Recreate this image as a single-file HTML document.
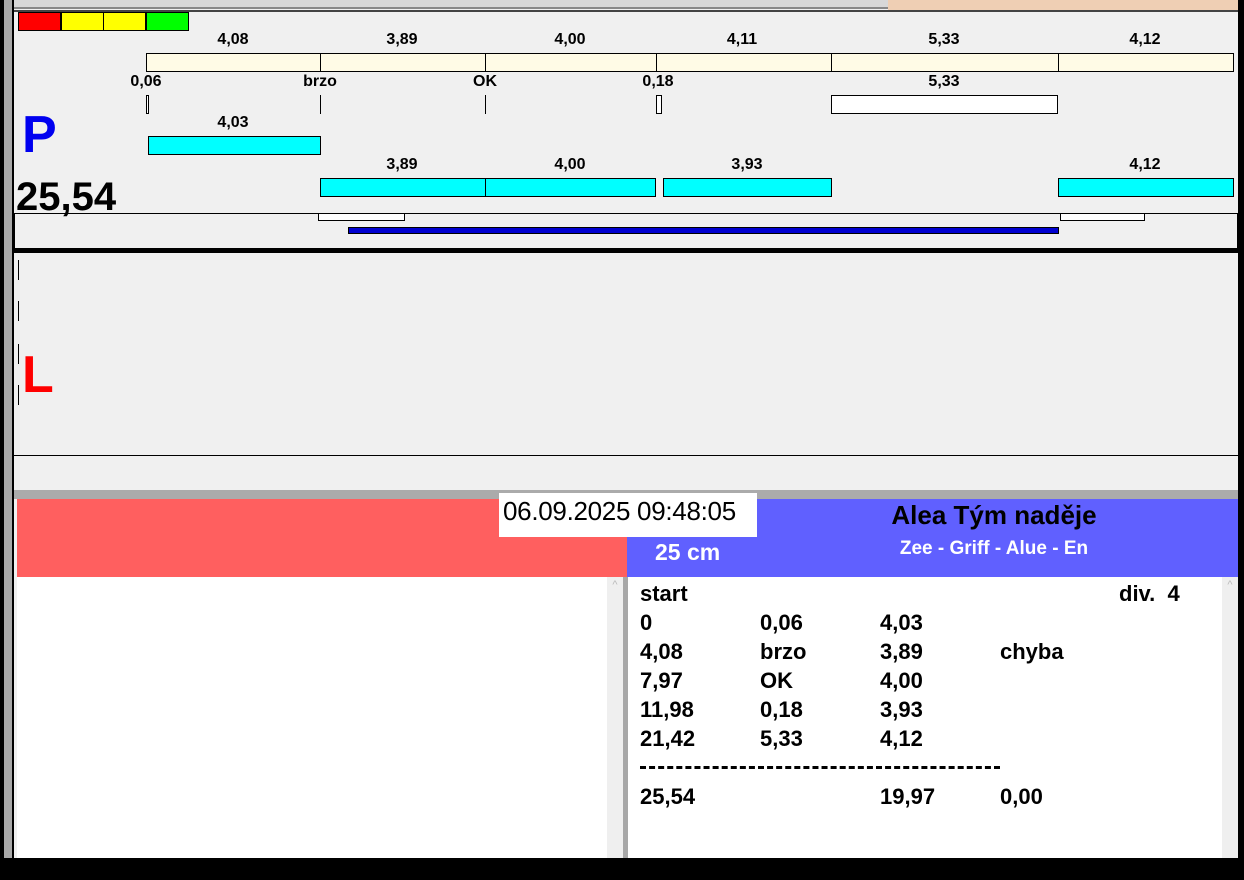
<!DOCTYPE html>
<html><head><meta charset="utf-8"><style>
*{margin:0;padding:0;box-sizing:border-box}
body{width:1244px;height:880px;background:#f0f0f0;position:relative;overflow:hidden;font-family:"Liberation Sans",sans-serif}
div{position:absolute}
.t{font-weight:bold;font-size:16px;color:#000;text-align:center;width:80px;line-height:18px}
.y{background:#fffbe6;border:1px solid #000;height:19px;top:53px}
.c{background:#00ffff;border:1px solid #000;height:19px}
.r{font-weight:bold;font-size:22px;line-height:29px;color:#000}
</style></head><body>
<div style="left:0;top:0;width:4px;height:880px;background:#000"></div>
<div style="left:4px;top:0;width:8px;height:880px;background:#a8a8a8"></div>
<div style="left:12px;top:0;width:2px;height:880px;background:#000"></div>
<div style="left:1238px;top:0;width:6px;height:880px;background:#000"></div>
<div style="left:14px;top:0;width:874px;height:9px;background:#d8d8d8;border-bottom:2px solid #888"></div>
<div style="left:888px;top:0;width:350px;height:11px;background:#efcfb4"></div>
<div style="left:14px;top:10px;width:1224px;height:2px;background:#444"></div>
<div style="left:18px;top:12px;width:43px;height:19px;background:#f00;border:1px solid #000"></div>
<div style="left:61px;top:12px;width:43px;height:19px;background:#ff0;border:1px solid #000"></div>
<div style="left:103px;top:12px;width:43px;height:19px;background:#ff0;border:1px solid #000"></div>
<div style="left:146px;top:12px;width:43px;height:19px;background:#0f0;border:1px solid #000"></div>
<div class="t" style="left:193px;top:31px">4,08</div>
<div class="t" style="left:362px;top:31px">3,89</div>
<div class="t" style="left:530px;top:31px">4,00</div>
<div class="t" style="left:702px;top:31px">4,11</div>
<div class="t" style="left:904px;top:31px">5,33</div>
<div class="t" style="left:1105px;top:31px">4,12</div>
<div class="y" style="left:146px;width:175px"></div>
<div class="y" style="left:320px;width:166px"></div>
<div class="y" style="left:485px;width:172px"></div>
<div class="y" style="left:656px;width:176px"></div>
<div class="y" style="left:831px;width:228px"></div>
<div class="y" style="left:1058px;width:176px"></div>
<div class="t" style="left:106px;top:73px">0,06</div>
<div class="t" style="left:280px;top:73px">brzo</div>
<div class="t" style="left:445px;top:73px">OK</div>
<div class="t" style="left:618px;top:73px">0,18</div>
<div class="t" style="left:904px;top:73px">5,33</div>
<div style="left:146px;top:95px;width:3px;height:19px;border:1px solid #000;background:#fff"></div>
<div style="left:320px;top:95px;width:1px;height:19px;background:#000"></div>
<div style="left:485px;top:95px;width:1px;height:19px;background:#000"></div>
<div style="left:656px;top:95px;width:6px;height:19px;border:1px solid #000;background:#fff"></div>
<div style="left:831px;top:95px;width:227px;height:19px;border:1px solid #000;background:#fff"></div>
<div style="left:22px;top:105px;font-size:52px;font-weight:bold;color:#0000f0;line-height:60px">P</div>
<div class="t" style="left:193px;top:114px">4,03</div>
<div class="c" style="left:148px;top:136px;width:173px"></div>
<div class="t" style="left:362px;top:156px">3,89</div>
<div class="t" style="left:530px;top:156px">4,00</div>
<div class="t" style="left:707px;top:156px">3,93</div>
<div class="t" style="left:1105px;top:156px">4,12</div>
<div class="c" style="left:320px;top:178px;width:166px"></div>
<div class="c" style="left:485px;top:178px;width:171px"></div>
<div class="c" style="left:663px;top:178px;width:169px"></div>
<div class="c" style="left:1058px;top:178px;width:176px"></div>
<div style="left:16px;top:174px;font-size:40px;font-weight:bold;line-height:46px">25,54</div>
<div style="left:14px;top:213px;width:1224px;height:36px;border-top:1px solid #000;border-left:1px solid #000;border-right:1px solid #000"></div>
<div style="left:318px;top:213px;width:87px;height:8px;border:1px solid #000;background:#fff"></div>
<div style="left:1060px;top:213px;width:85px;height:8px;border:1px solid #000;background:#fff"></div>
<div style="left:348px;top:227px;width:711px;height:7px;background:#0000d0;border:1px solid #000"></div>
<div style="left:14px;top:248px;width:1224px;height:5px;background:#000"></div>
<div style="left:18px;top:260px;width:1px;height:20px;background:#000"></div>
<div style="left:18px;top:301px;width:1px;height:20px;background:#000"></div>
<div style="left:18px;top:344px;width:1px;height:20px;background:#000"></div>
<div style="left:18px;top:385px;width:1px;height:20px;background:#000"></div>
<div style="left:22px;top:347px;font-size:52px;font-weight:bold;color:#f00;line-height:56px">L</div>
<div style="left:14px;top:455px;width:1224px;height:1px;background:#000"></div>
<div style="left:14px;top:490px;width:1224px;height:9px;background:#ababab"></div>
<div style="left:17px;top:499px;width:610px;height:78px;background:#ff5f5f"></div>
<div style="left:627px;top:499px;width:611px;height:78px;background:#6060ff"></div>
<div style="left:499px;top:493px;width:258px;height:44px;background:#fff"></div>
<div style="left:503px;top:495px;font-size:26px;line-height:32px;letter-spacing:-0.3px">06.09.2025 09:48:05</div>
<div style="left:794px;top:499px;width:400px;text-align:center;font-size:26px;font-weight:bold;line-height:32px">Alea Tým naděje</div>
<div style="left:794px;top:537px;width:400px;text-align:center;font-size:19px;font-weight:bold;line-height:24px;color:#fff">Zee - Griff - Alue - En</div>
<div style="left:655px;top:538px;font-size:23px;font-weight:bold;line-height:28px;color:#fff">25 cm</div>
<div style="left:17px;top:577px;width:590px;height:281px;background:#fff"></div>
<div style="left:607px;top:577px;width:16px;height:281px;background:#efefef;color:#bbb;font-size:11px;text-align:center;line-height:16px">^</div>
<div style="left:623px;top:577px;width:5px;height:281px;background:#a8a8a8"></div>
<div style="left:628px;top:577px;width:594px;height:281px;background:#fff"></div>
<div style="left:1222px;top:577px;width:16px;height:281px;background:#efefef;color:#bbb;font-size:11px;text-align:center;line-height:16px">^</div>
<div class="r" style="left:640px;top:579px">start</div>
<div class="r" style="left:1119px;top:579px">div.&nbsp; 4</div>
<div class="r" style="left:640px;top:608px">0<br>4,08<br>7,97<br>11,98<br>21,42</div>
<div class="r" style="left:760px;top:608px">0,06<br>brzo<br>OK<br>0,18<br>5,33</div>
<div class="r" style="left:880px;top:608px">4,03<br>3,89<br>4,00<br>3,93<br>4,12</div>
<div class="r" style="left:1000px;top:637px">chyba</div>
<div style="left:640px;top:766px;width:360px;height:0;border-top:3px dashed #000"></div>
<div class="r" style="left:640px;top:782px">25,54</div>
<div class="r" style="left:880px;top:782px">19,97</div>
<div class="r" style="left:1000px;top:782px">0,00</div>
<div style="left:0;top:858px;width:1244px;height:22px;background:#000"></div>
</body></html>
